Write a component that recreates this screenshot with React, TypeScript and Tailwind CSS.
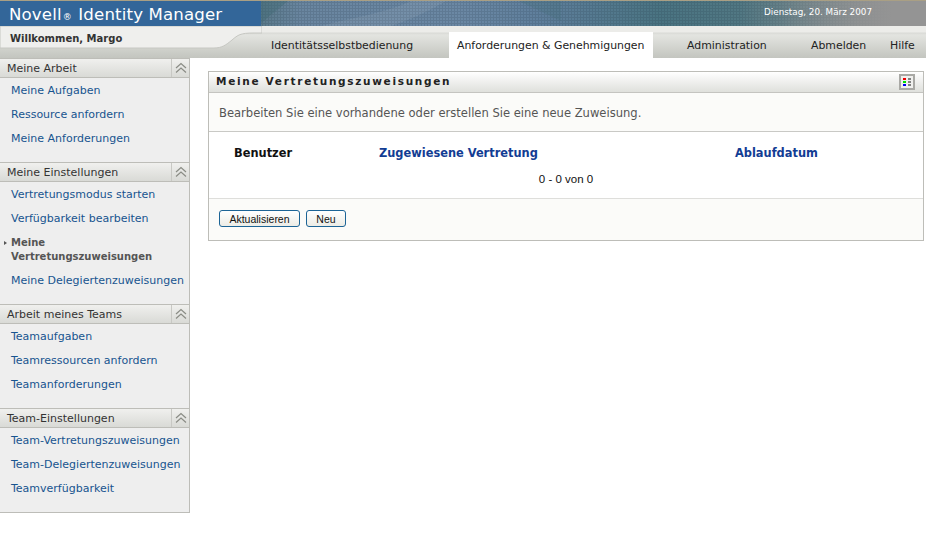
import React from 'react'

const dejavu = "font-['DejaVu_Sans',Verdana,sans-serif]"

const sections = [
  { title: 'Meine Arbeit', items: ['Meine Aufgaben', 'Ressource anfordern', 'Meine Anforderungen'], pad: 'pt-[1px] pb-[11px]' },
  { title: 'Meine Einstellungen', items: ['Vertretungsmodus starten', 'Verfügbarkeit bearbeiten', '*Meine Vertretungszuweisungen', 'Meine Delegiertenzuweisungen'], pad: 'pt-[1px] pb-[11px]' },
  { title: 'Arbeit meines Teams', items: ['Teamaufgaben', 'Teamressourcen anfordern', 'Teamanforderungen'], pad: 'pt-[1px] pb-[11px]' },
  { title: 'Team-Einstellungen', items: ['Team-Vertretungszuweisungen', 'Team-Delegiertenzuweisungen', 'Teamverfügbarkeit'], pad: 'pt-[1px] pb-[12px]' },
]

const Chevrons = () => (
  <svg width="14" height="12" viewBox="0 0 14 12" fill="none" stroke="#8a8c85" strokeWidth="1.2">
    <path d="M2 6 L7 1.5 L12 6" />
    <path d="M2 10.5 L7 6 L12 10.5" />
  </svg>
)

const SideSection = ({ title, items, pad }: { title: string; items: string[]; pad: string }) => (
  <div>
    <div className="flex h-[20px] border-y border-[#bdbdb8] bg-gradient-to-b from-[#f0f0ee] to-[#d9dad6]">
      <div className="flex-1 pl-[7px] text-[11px] leading-[19px] text-[#333]">{title}</div>
      <div className="flex w-[18px] items-center justify-center border-l border-[#c8c8c4]">
        <Chevrons />
      </div>
    </div>
    <ul className={pad}>
      {items.map((item) =>
        item.startsWith('*') ? (
          <li key={item} className="relative py-[5px] pl-[11px] pr-2 text-[10px] font-bold leading-[14px] text-[#555]">
            <span className="absolute left-[4px] top-[10px] h-0 w-0 border-y-[2px] border-l-[3px] border-y-transparent border-l-[#555]" />
            {item.slice(1)}
          </li>
        ) : (
          <li key={item} className="py-[5px] pl-[11px] text-[11px] leading-[14px] text-[#17548f]">
            {item}
          </li>
        ),
      )}
    </ul>
  </div>
)

export default function App() {
  return (
    <div className={`${dejavu} min-h-[540px] w-[926px] overflow-hidden bg-white`}>
      {/* banner */}
      <div className="flex h-[26px] border-t border-[#a99f84]">
        <div className="w-[261px] bg-[#336699] pl-[9px] text-[16.6px] leading-[27px] tracking-[0.15px] text-white">
          Novell<span className="mx-[1px] text-[9px]">®</span> Identity Manager
        </div>
        <div className="relative flex flex-1 justify-end bg-[linear-gradient(90deg,transparent_72%,#949494_95%),radial-gradient(circle,rgba(30,50,65,0.16)_1px,transparent_1.3px),linear-gradient(90deg,#5a7a8a_0%,#6a86a0_6%,#6b88a4_30%,#5f7f9c_42%,#4a7482_60%,#557a84_78%,#7d8a8e_90%,#949494_100%)] bg-[length:auto,3px_3px,auto] pr-[54px] text-[8.8px] leading-[23px] text-white">
          <svg className="absolute inset-0" width="665" height="25" viewBox="0 0 665 25">
            <path d="M0 0 H27 L0 22 Z" fill="#3f6a72" opacity="0.4" />
            <path d="M60 25 C85 18 125 12 150 0 H185 C165 12 145 20 130 25 Z" fill="#ffffff" opacity="0.07" />
            <path d="M258 0 H300 V20 Z" fill="#3f6a72" opacity="0.25" />
          </svg>
          <span className="relative">Dienstag, 20. März 2007</span>
        </div>
      </div>

      {/* welcome + tabs */}
      <div className="relative flex h-[32px] bg-[linear-gradient(180deg,#ecece9_0,#ecece9_6px,#d9dad6_7px,#e3e4e0_9px,#c3c5bf_100%)]">
        <svg className="absolute left-0 top-0" width="262" height="23" viewBox="0 0 262 23">
          <path d="M0 0 H262 V7 H254 C240 7 238 9 232 14 C226 19 222 22 214 22 H0 Z" fill="#efefed" stroke="#c6c7c2" strokeWidth="1" />
        </svg>
        <div className="relative w-[240px] pl-[10px] pt-[6px] text-[10px] font-bold leading-[14px] text-[#333]">Willkommen, Margo</div>
        <div className="relative mt-[6px] flex flex-1 text-[10.9px] leading-[28px] text-[#222]">
          <div className="w-[209px] pl-[31px]">Identitätsselbstbedienung</div>
          <div className="w-[204px] bg-white pl-[8px]">Anforderungen &amp; Genehmigungen</div>
          <div className="flex flex-1">
            <div className="ml-[34px] w-[124px]">Administration</div>
            <div className="w-[79px]">Abmelden</div>
            <div>Hilfe</div>
          </div>
        </div>
      </div>

      <div className="flex items-start">
        {/* sidebar */}
        <aside className="h-[455px] w-[190px] border-b border-r border-[#bdbdb8] bg-[#eeeeee]">
          {sections.map((s) => (
            <SideSection key={s.title} title={s.title} items={s.items} pad={s.pad} />
          ))}
        </aside>

        {/* main */}
        <main className="ml-[18px] mt-[13px] h-[170px] w-[716px] border border-[#bdbdb8] bg-[#fbfbf9]">
          <div className="flex h-[21px] items-center justify-between border-b border-[#c4c4c0] bg-gradient-to-b from-white to-[#dfe0dc] pl-[7px]">
            <h2 className="text-[10.5px] font-bold tracking-[1.7px] text-[#222]">Meine Vertretungszuweisungen</h2>
            <div className="mr-[8px] flex h-[16px] w-[16px] items-center justify-center border-2 border-[#a9a9a5] bg-[#f0f0ee]">
              <svg width="8" height="8" viewBox="0 0 8 8">
                <rect x="0" y="0" width="3" height="2" fill="#f00000" />
                <rect x="0" y="3" width="3" height="2" fill="#00e000" />
                <rect x="0" y="6" width="3" height="2" fill="#0000f0" />
                <rect x="5" y="0" width="3" height="2" fill="#808080" />
                <rect x="5" y="3" width="3" height="2" fill="#808080" />
                <rect x="5" y="6" width="3" height="2" fill="#808080" />
              </svg>
            </div>
          </div>
          <p className="h-[39px] border-b border-[#c9c9c5] pl-[10px] pt-[12px] text-[11.55px] leading-[16px] text-[#555]">
            Bearbeiten Sie eine vorhandene oder erstellen Sie eine neue Zuweisung.
          </p>
          <div className="h-[67px] border-b border-[#dededb] bg-white">
            <div className="flex pt-[13px] text-[11.4px] font-bold leading-[16px]">
              <div className="w-[170px] pl-[25px] text-[#111]">Benutzer</div>
              <div className="w-[356px] text-[#123c93]">Zugewiesene Vertretung</div>
              <div className="text-[#123c93]">Ablaufdatum</div>
            </div>
            <div className="pt-[12px] text-center font-['Liberation_Sans',Arial,sans-serif] text-[11.5px] leading-[12px] text-[#111]">0 - 0 von 0</div>
          </div>
          <div className="flex gap-[6px] pl-[10px] pt-[11px] font-['Liberation_Sans',Arial,sans-serif] text-[10.5px] text-[#111]">
            <button className="h-[17px] w-[81px] rounded-[3px] border border-[#1c6496] bg-gradient-to-b from-white to-[#ecece6] leading-[14px]">Aktualisieren</button>
            <button className="h-[17px] w-[40px] rounded-[3px] border border-[#1c6496] bg-gradient-to-b from-white to-[#ecece6] leading-[14px]">Neu</button>
          </div>
        </main>
      </div>
    </div>
  )
}
